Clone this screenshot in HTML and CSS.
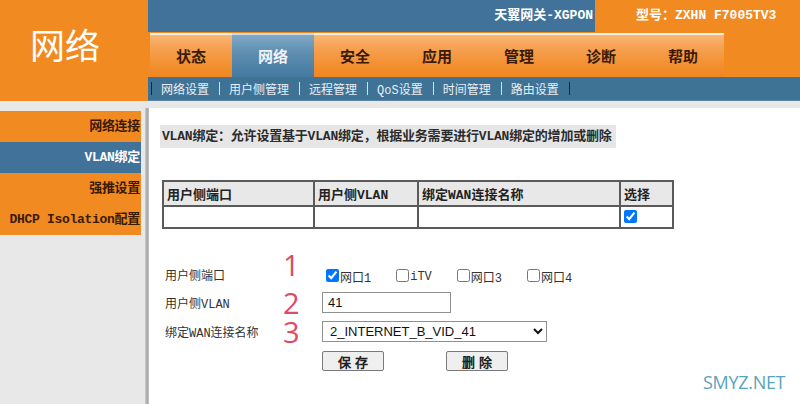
FILE: index.html
```html
<!DOCTYPE html>
<html lang="zh-CN">
<head>
  <meta charset="UTF-8" />
  <meta name="viewport" content="width=device-width, initial-scale=1.0"/>
  <title>天翼网关 - 网络</title>
  <link rel="stylesheet" href="styles.css">
</head>
<body>

  <header class="header">
    <div class="brand">网络</div>
    <div class="head-main">
      <div class="topbar">
        <div class="gw">天翼网关-XGPON</div>
        <div class="model">型号：ZXHN F7005TV3</div>
      </div>
      <nav class="tabs">
        <a class="tab">状态</a>
        <a class="tab active">网络</a>
        <a class="tab">安全</a>
        <a class="tab">应用</a>
        <a class="tab">管理</a>
        <a class="tab">诊断</a>
        <a class="tab">帮助</a>
      </nav>
      <div class="subnav">
        <span class="sep dark first"></span><a>网络设置</a>
        <span class="sep"></span><a>用户侧管理</a>
        <span class="sep"></span><a>远程管理</a>
        <span class="sep"></span><a>QoS设置</a>
        <span class="sep"></span><a>时间管理</a>
        <span class="sep"></span><a>路由设置</a>
        <span class="sep dark"></span>
      </div>
    </div>
  </header>

  <div class="main">
    <aside class="side">
      <a class="side-item">网络连接</a>
      <a class="side-item current">VLAN绑定</a>
      <a class="side-item">强推设置</a>
      <a class="side-item">DHCP Isolation配置</a>
    </aside>
    <div class="split"></div>

    <section class="content">
      <div class="intro">VLAN绑定：允许设置基于VLAN绑定，根据业务需要进行VLAN绑定的增加或删除</div>

      <table class="bind-table">
        <tr>
          <th class="c1">用户侧端口</th>
          <th class="c2">用户侧VLAN</th>
          <th class="c3">绑定WAN连接名称</th>
          <th class="c4">选择</th>
        </tr>
        <tr>
          <td></td>
          <td></td>
          <td></td>
          <td><input type="checkbox" checked /></td>
        </tr>
      </table>

      <form class="bind-form">
        <div class="row row-ports">
          <span class="label">用户侧端口</span>
          <span class="num num-1">1</span>
          <div class="ports">
            <label class="port"><input type="checkbox" checked />网口1</label>
            <label class="port"><input type="checkbox" />iTV</label>
            <label class="port"><input type="checkbox" />网口3</label>
            <label class="port"><input type="checkbox" />网口4</label>
          </div>
        </div>
        <div class="row">
          <span class="label">用户侧VLAN</span>
          <span class="num">2</span>
          <input class="text-input" type="text" value="41" />
        </div>
        <div class="row">
          <span class="label">绑定WAN连接名称</span>
          <span class="num">3</span>
          <select class="wan-select">
            <option>2_INTERNET_B_VID_41</option>
          </select>
        </div>
        <div class="buttons">
          <button type="button">保 存</button>
          <button type="button">删 除</button>
        </div>
      </form>

      <div class="watermark">SMYZ.NET</div>
    </section>
  </div>

</body>
</html>
```

FILE: styles.css
```css
body {
  margin: 0;
  padding: 0;
  width: 800px;
  height: 404px;
  overflow: hidden;
  font-family: 'Liberation Mono', 'Noto Sans CJK SC', monospace;
  font-size: 12px;
  color: #222;
  background: #fff;
}

a {
  text-decoration: none;
}

/* header */

.header {
  display: flex;
  height: 101px;
}

.brand {
  width: 148px;
  background: #f18a21;
  color: #fff;
  font-family: 'Noto Sans CJK SC', sans-serif;
  font-size: 35px;
  line-height: 40px;
  padding: 24px 0 0 30px;
  box-sizing: border-box;
}

.head-main {
  flex: 1;
  display: flex;
  flex-direction: column;
}

.topbar {
  display: flex;
  height: 32px;
  line-height: 32px;
  font-size: 13px;
  font-weight: bold;
  color: #fff;
}

.gw {
  flex: 1;
  background: #41739a;
  text-align: right;
  padding-right: 2px;
}

.model {
  width: 205px;
  background: #f18a21;
  padding-left: 41px;
  box-sizing: border-box;
}

.tabs {
  display: flex;
  height: 45px;
  padding: 1px 0 0 2px;
  box-sizing: border-box;
  background: #f18a21;
}

.tab {
  width: 82px;
  height: 44px;
  line-height: 42px;
  text-align: center;
  font-family: 'Noto Sans CJK SC', sans-serif;
  font-size: 15px;
  font-weight: bold;
  color: #3a1a05;
  border-top: 2px solid #fdf1e4;
  box-sizing: border-box;
  background: linear-gradient(to bottom, #f9b776 0%, #f6a153 30%, #f28e2e 75%, #ef8622 100%);
}

.tab.active {
  color: #eef4fa;
  border-top-color: #c9dcea;
  background: linear-gradient(to bottom, #80a9c6 0%, #5f8fb2 40%, #4479a0 100%);
}

.subnav {
  display: flex;
  align-items: center;
  height: 24px;
  background: #3f7396;
  color: #e9eff5;
  font-size: 12px;
  border-bottom: 1px solid #5c86a4;
  box-sizing: border-box;
}

.subnav a {
  color: #e9eff5;
  white-space: nowrap;
}

.sep {
  display: inline-block;
  width: 1px;
  height: 13px;
  background: #d4dfe8;
  margin: 0 9px 0 10px;
}

.sep.dark {
  background: #16283a;
}

.sep.first {
  margin-left: 3px;
}

/* main area */

.main {
  display: flex;
  height: 303px;
  background: #e8e8e8;
  padding-top: 7px;
  box-sizing: border-box;
}

.side {
  width: 145px;
  padding-top: 3px;
  display: flex;
  flex-direction: column;
}

.side-item {
  display: block;
  width: 141px;
  height: 31px;
  line-height: 31px;
  padding-right: 1px;
  box-sizing: border-box;
  text-align: right;
  background: #f18a21;
  color: #3a1a05;
  font-size: 13px;
  font-weight: bold;
  letter-spacing: -0.3px;
  white-space: nowrap;
}

.side-item.current {
  background: #41739a;
  color: #fff;
}

.split {
  width: 4px;
  background: linear-gradient(to right, #cfcfcf, #a5a5a5 50%, #c4c4c4);
}

.content {
  flex: 1;
  position: relative;
  background: #fff;
  padding: 17px 0 0 11px;
}

.intro {
  width: max-content;
  height: 23px;
  line-height: 23px;
  padding: 0 4px 0 2px;
  background: #e6e6e6;
  font-size: 13px;
  font-weight: bold;
  letter-spacing: -0.2px;
  color: #2b2b2b;
}

.bind-table {
  margin: 32px 0 0 2px;
  border-collapse: collapse;
  border: 2px solid #5a5a5a;
}

.bind-table th,
.bind-table td {
  border: 2px solid #5a5a5a;
  padding: 0 3px;
  text-align: left;
}

.bind-table th {
  height: 23px;
  background: #e8e8e8;
  font-size: 13px;
  font-weight: bold;
  color: #222;
}

.bind-table td {
  height: 20px;
  background: #fff;
}

.bind-table td input {
  margin: 2px 0 0 0;
}

.c1 { width: 143px; }
.c2 { width: 96px; }
.c3 { width: 194px; }
.c4 { width: 45px; }

/* form */

.bind-form {
  margin: 33px 0 0 5px;
}

.row {
  display: flex;
  align-items: center;
  height: 29px;
}

.row-ports {
  height: 26px;
}

.label {
  width: 118px;
  font-size: 12px;
  color: #333;
  white-space: nowrap;
}

.num {
  width: 39px;
  height: 20px;
  line-height: 20px;
  font-family: 'Open Sans', sans-serif;
  font-size: 29px;
  color: #e04a63;
}

.num-1 {
  margin-top: -20px;
}

.ports {
  display: flex;
  align-items: center;
}

.port {
  display: flex;
  align-items: center;
  margin-right: 21px;
  font-size: 12px;
  color: #333;
  padding-top: 3px;
}

.port input {
  margin: -3px 1px 0 4px;
  width: 13px;
  height: 13px;
}

.text-input {
  width: 129px;
  height: 21px;
  box-sizing: border-box;
  border: 1px solid #8f8f8f;
  padding: 0 5px;
  font-family: 'Liberation Sans', Arial, sans-serif;
  font-size: 13px;
  color: #111;
}

.wan-select {
  width: 225px;
  height: 21px;
  box-sizing: border-box;
  border: 1px solid #8f8f8f;
  border-radius: 0;
  background: #fff;
  padding: 0 3px;
  font-family: 'Liberation Sans', Arial, sans-serif;
  font-size: 13px;
  color: #111;
}

.buttons {
  display: flex;
  gap: 62px;
  margin: 5px 0 0 157px;
}

.buttons button {
  width: 62px;
  height: 20px;
  padding: 0;
  border: 1px solid #7a7a7a;
  border-radius: 2px;
  background: #efefef;
  font-size: 13px;
  font-weight: bold;
  color: #222;
  cursor: pointer;
}

.watermark {
  position: absolute;
  left: 554px;
  top: 262px;
  font-family: 'Open Sans', sans-serif;
  font-size: 18px;
  color: #5aa3bc;
  letter-spacing: -0.3px;
}
```
